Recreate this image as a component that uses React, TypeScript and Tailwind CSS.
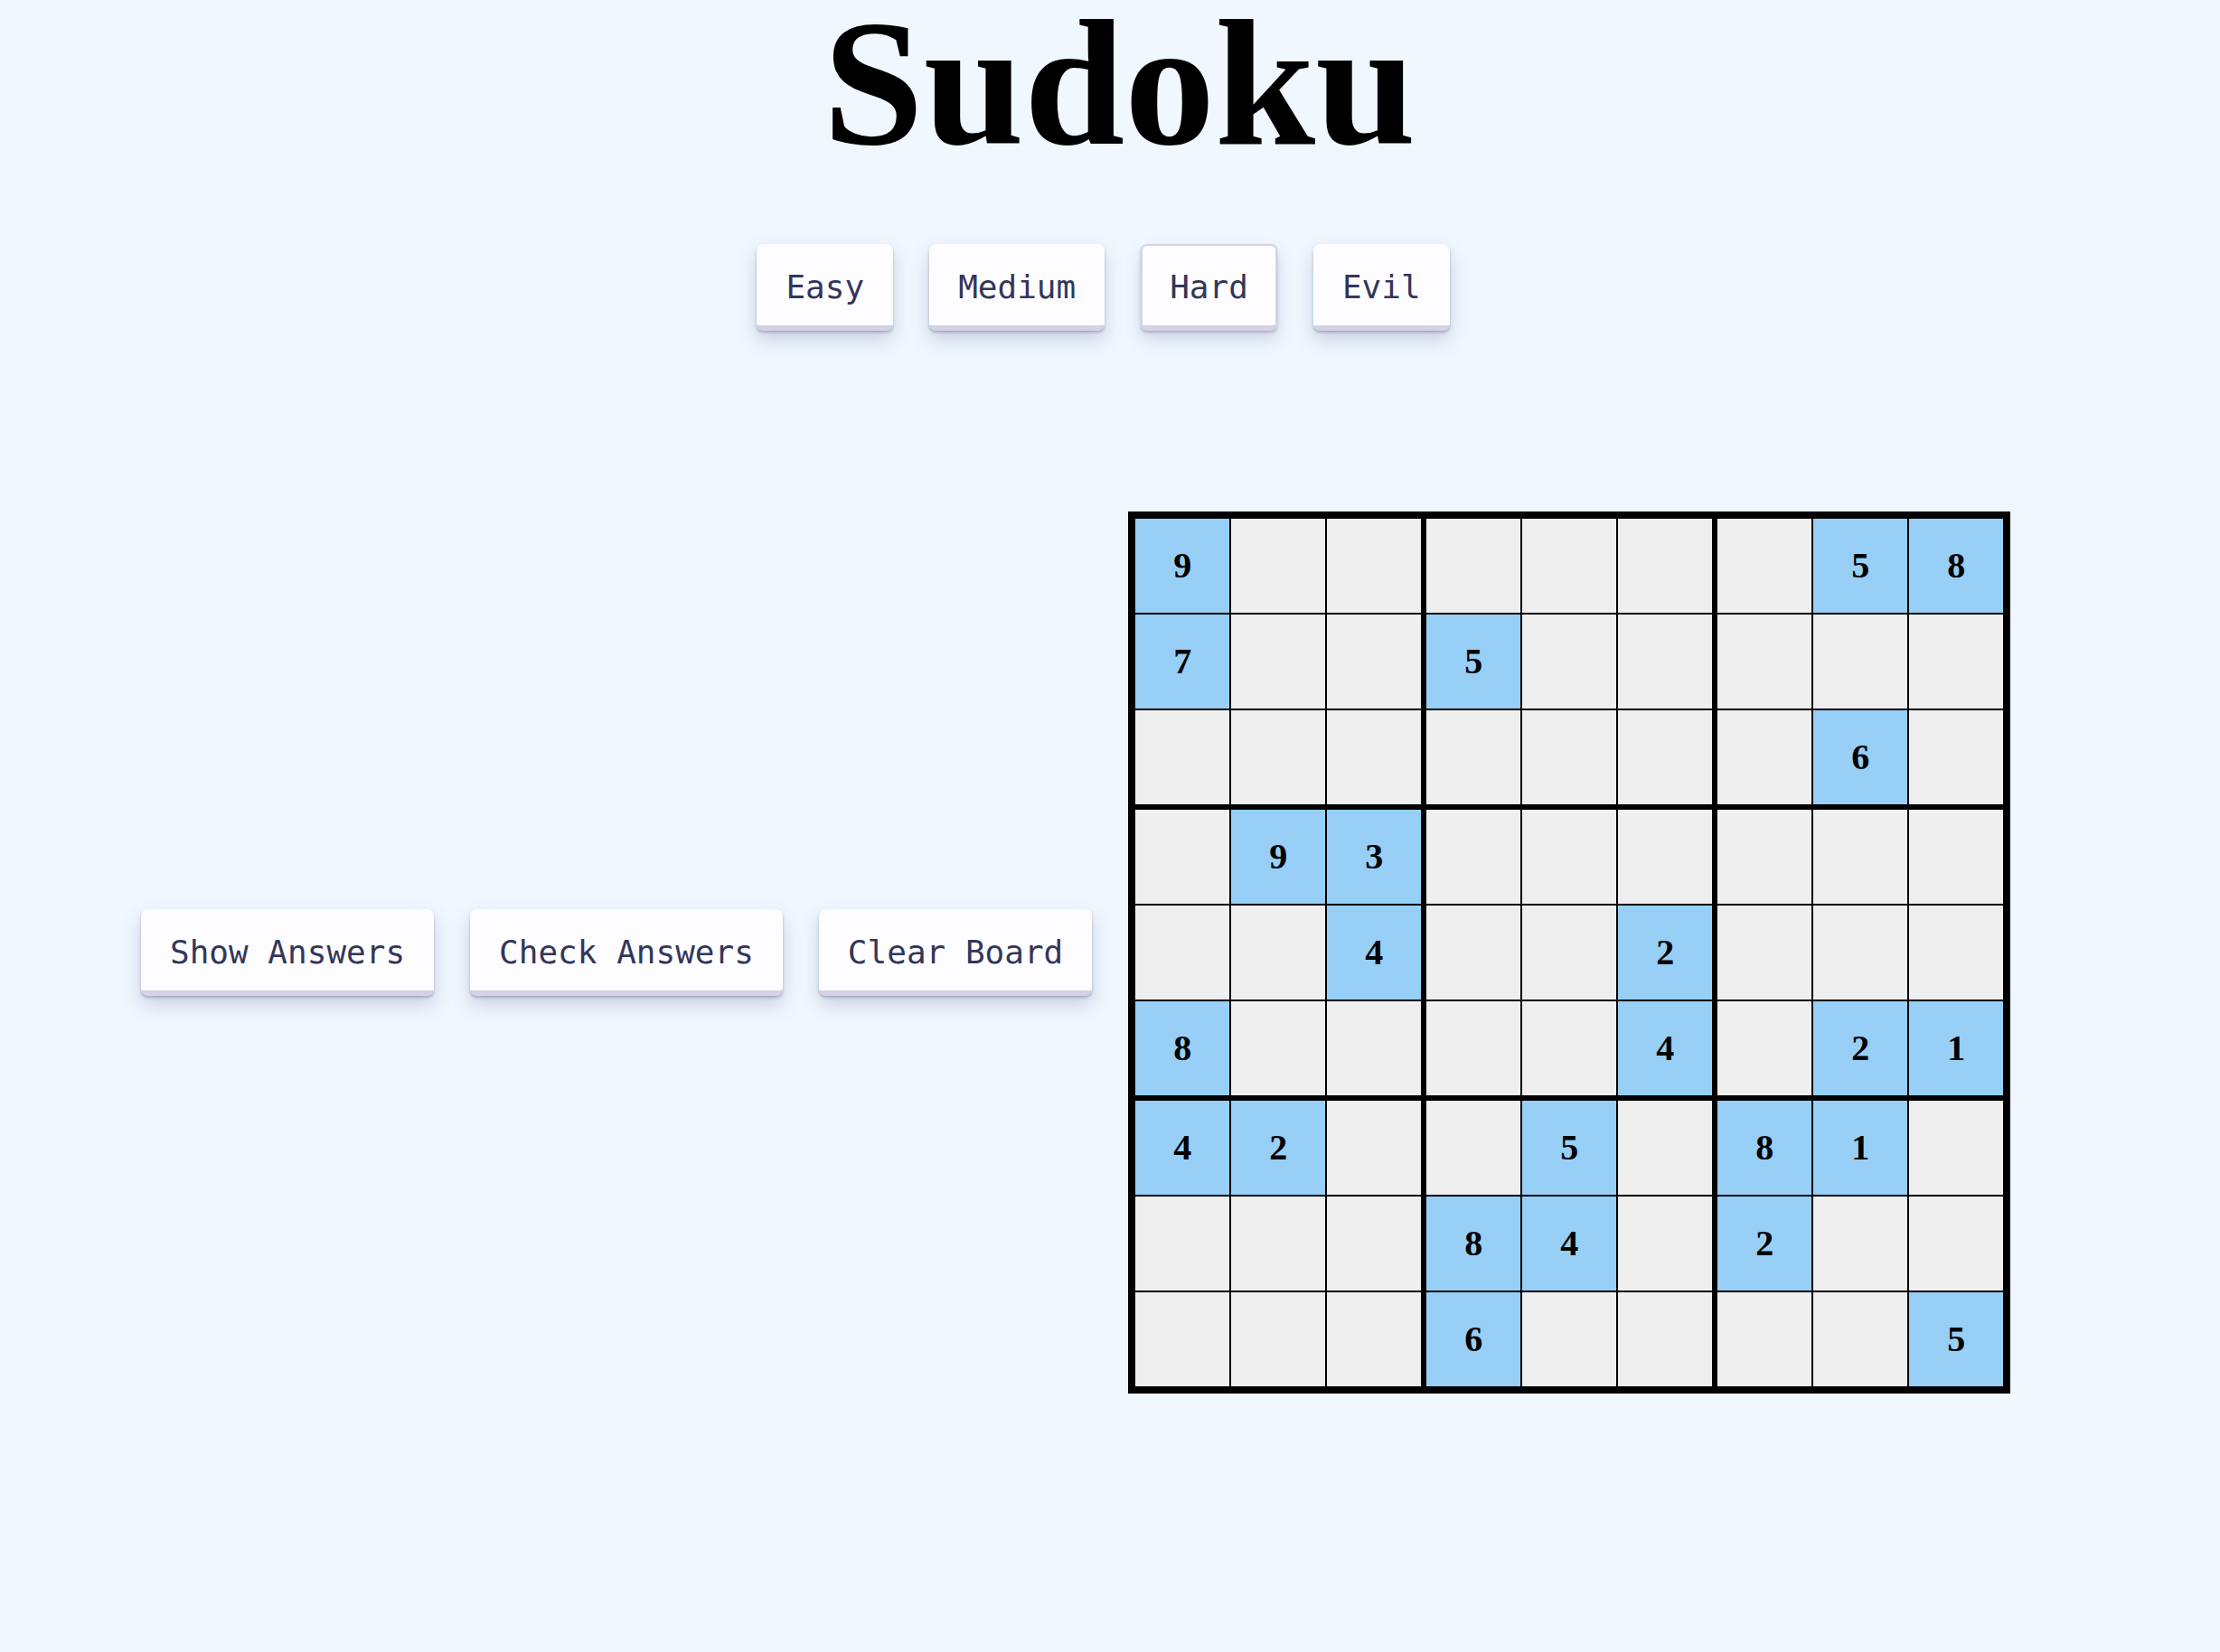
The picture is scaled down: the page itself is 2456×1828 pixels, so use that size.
const puzzle: (number | null)[][] = [
	[9, null, null, null, null, null, null, 5, 8],
	[7, null, null, 5, null, null, null, null, null],
	[null, null, null, null, null, null, null, 6, null],
	[null, 9, 3, null, null, null, null, null, null],
	[null, null, 4, null, null, 2, null, null, null],
	[8, null, null, null, null, 4, null, 2, 1],
	[4, 2, null, null, 5, null, 8, 1, null],
	[null, null, null, 8, 4, null, 2, null, null],
	[null, null, null, 6, null, null, null, null, 5],
];

const levels = ["Easy", "Medium", "Hard", "Evil"];
const actions = ["Show Answers", "Check Answers", "Clear Board"];

function Button({ label, active }: { label: string; active?: boolean }) {
	return (
		<button
			type="button"
			className={`h-[96px] px-[32px] pt-[5px] flex items-center justify-center rounded-[7px] bg-[#fdfdff] text-[36px] leading-none text-[#33365a] font-['DejaVu_Sans_Mono',monospace] border-b-[6px] border-[#d4d2e4] ${
				active
					? "shadow-[inset_0_2px_0_#d4d2e4,inset_2px_0_0_#d4d2e4,inset_-2px_0_0_#d4d2e4,0_2px_3px_rgba(80,80,120,0.3),0_10px_18px_rgba(90,95,140,0.22)]"
					: "shadow-[0_2px_3px_rgba(80,80,120,0.35),0_10px_20px_rgba(90,95,140,0.25)]"
			}`}
		>
			{label}
		</button>
	);
}

function Block({ br, bc }: { br: number; bc: number }) {
	const cells = [];
	for (let r = 0; r < 3; r++) {
		for (let c = 0; c < 3; c++) {
			const v = puzzle[br * 3 + r][bc * 3 + c];
			cells.push(
				<div
					key={`${r}-${c}`}
					className={`w-[104px] h-[104px] flex items-center justify-center text-[40px] font-bold font-['Liberation_Serif',serif] text-black ${
						v ? "bg-[#97cff6]" : "bg-[#efefef]"
					}`}
				>
					{v ?? ""}
				</div>,
			);
		}
	}
	return <div className="grid grid-cols-3 gap-[2px]">{cells}</div>;
}

export default function App() {
	return (
		<div className="min-h-screen bg-[#f0f7ff] pb-[200px]">
			<div className="pr-[15px] flex flex-col items-center">
				<h1 className="pl-[36px] text-[200px] leading-[183px] font-bold text-black font-['Liberation_Serif',serif]">
					Sudoku
				</h1>
				<div className="mt-[87px] flex gap-[40px]">
					{levels.map((l) => (
						<Button key={l} label={l} active={l === "Hard"} />
					))}
				</div>
			</div>
			<div className="mt-[200px] pl-[156px] flex items-center gap-[40px]">
				{actions.map((a) => (
					<Button key={a} label={a} />
				))}
				<div className="border-[8px] border-black bg-black grid grid-cols-3 gap-[6px]">
					{[0, 1, 2].map((br) =>
						[0, 1, 2].map((bc) => <Block key={`${br}${bc}`} br={br} bc={bc} />),
					)}
				</div>
			</div>
		</div>
	);
}
